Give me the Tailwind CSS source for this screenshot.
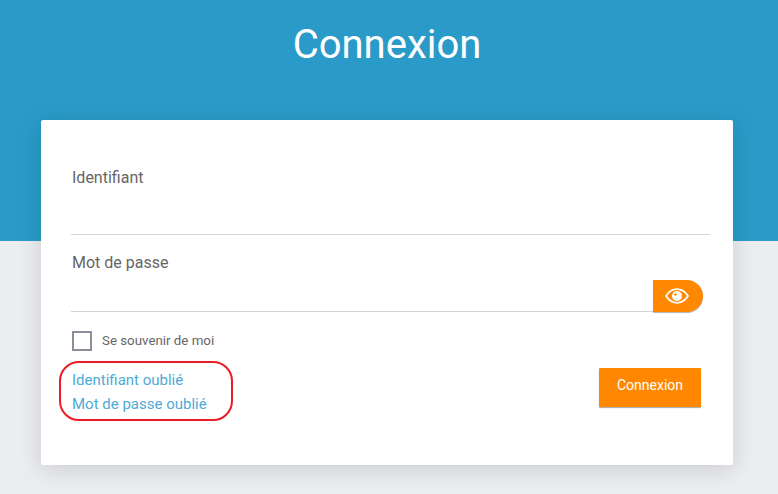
<!DOCTYPE html>
<html lang="fr">
<head>
    <meta charset="UTF-8">
    <meta name="viewport" content="width=device-width, initial-scale=1.0">
    <title>Connexion</title>
    <script src="https://cdn.jsdelivr.net/npm/@tailwindcss/browser@4"></script>
</head>
<body class="bg-[#ecedf1] font-['Roboto',sans-serif] h-[494px] overflow-hidden">

    <header class="bg-[#2a9bc9] h-[241px] pt-[18px] pr-[4px] text-center">
        <h1 class="text-white text-[40px] leading-[54px] font-normal">Connexion</h1>
    </header>

    <main class="relative z-10 mt-[-121px] ml-[41px] w-[692px] h-[345px] bg-white rounded-[2px] shadow-[0_4px_24px_rgba(0,0,0,0.14)] pl-[30px] pt-[48px]">
        <form>
            <label class="block text-[16px] leading-[20px] text-[#666] pl-[1px]">Identifiant</label>
            <div class="w-[639px] h-[47px] border-b border-[#d5d5d9]"></div>

            <label class="block mt-[18px] text-[16px] leading-[20px] text-[#666] pl-[1px]">Mot de passe</label>
            <div class="flex w-[632px] h-[39px] items-end">
                <div class="w-[582px] h-[10px] border-b border-[#d5d5d9]"></div>
                <button type="button" class="w-[50px] h-[32px] bg-[#ff8800] rounded-r-[16px] shadow-[0_1px_1px_rgba(0,0,0,0.3)] flex items-center justify-center pr-[3px]">
                    <svg width="24" height="16" viewBox="0 0 24 16" fill="none">
                        <path d="M1 8C4 3.500 7.800 1.200 12 1.200S20 3.500 23 8c-3 4.500-6.800 6.800-11 6.800S4 12.500 1 8Z" stroke="#fff" stroke-width="1.800"/>
                        <circle cx="12" cy="8" r="5" fill="#fff"/>
                        <circle cx="10.500" cy="6.500" r="1.300" fill="#ff8800"/>
                    </svg>
                </button>
            </div>

            <div class="flex items-center mt-[19px] pl-[1px]">
                <span class="w-[20px] h-[20px] border-2 border-[#8c8f99]"></span>
                <span class="ml-[10px] text-[13.300px] leading-[20px] text-[#666]">Se souvenir de moi</span>
            </div>

            <div class="flex justify-between w-[630px] mt-[17px] pl-[1px]">
                <div>
                    <a class="block text-[15px] leading-[24px] text-[#4fa9d6]">Identifiant oublié</a>
                    <a class="block text-[15px] leading-[24px] text-[#4fa9d6]">Mot de passe oublié</a>
                </div>
                <button type="button" class="w-[102px] h-[39px] pb-[5px] bg-[#ff8800] text-white text-[14px] rounded-[1px] shadow-[0_1px_1px_rgba(0,0,0,0.35)]">Connexion</button>
            </div>
        </form>

        <!-- annotation drawn over the links -->
        <div class="absolute left-[18px] top-[241px] w-[174px] h-[60px] border-[2.500px] border-[#ed1c24] rounded-[20px]"></div>
    </main>

</body>
</html>
